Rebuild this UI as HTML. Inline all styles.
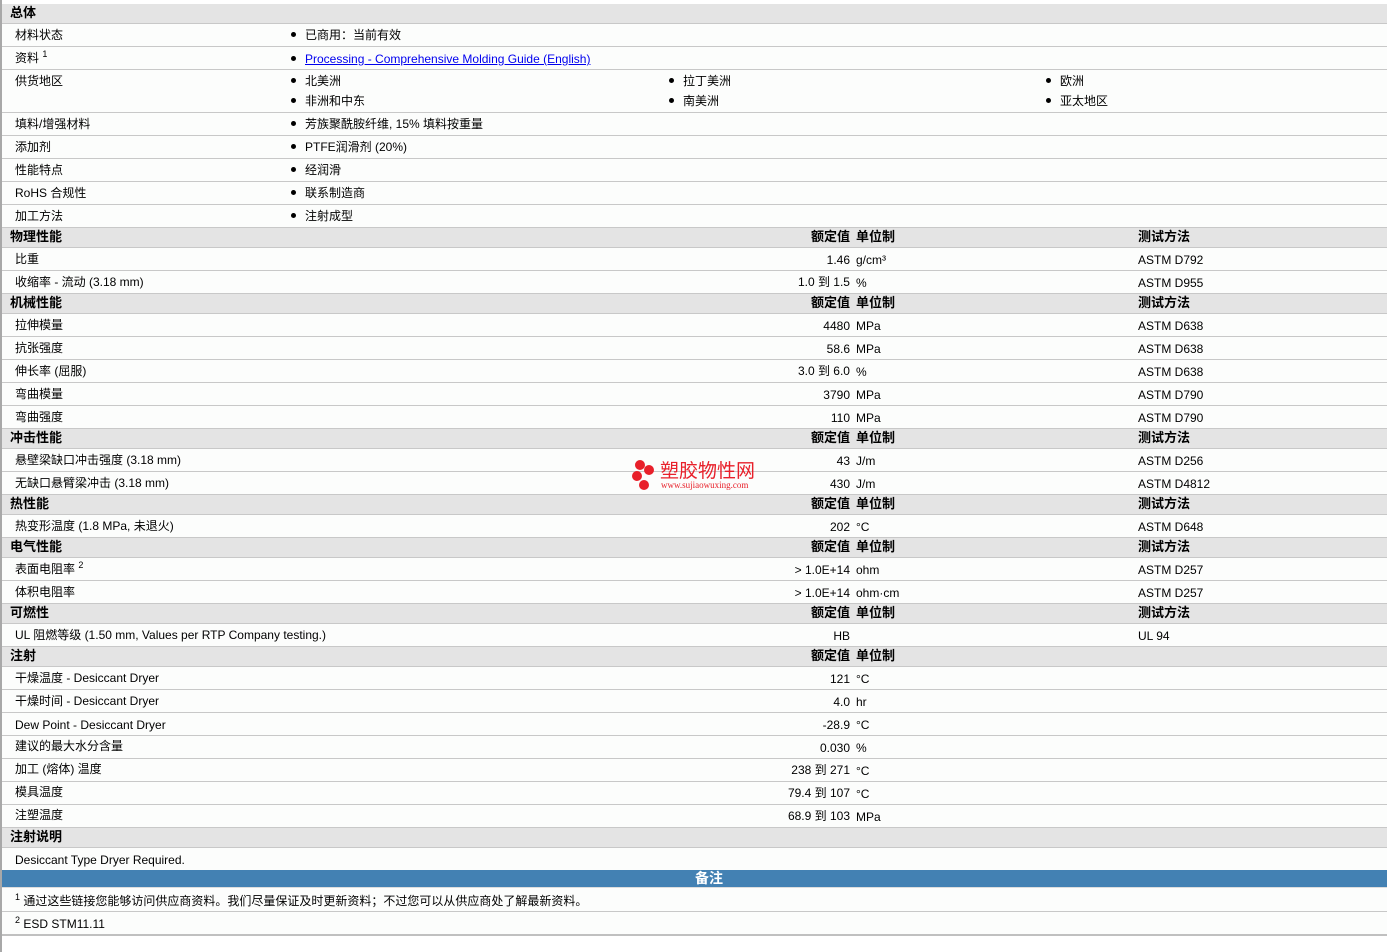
<!DOCTYPE html>
<html><head><meta charset="utf-8"><style>
html,body{margin:0;padding:0;background:#fff;}
body{width:1387px;height:952px;position:relative;overflow:hidden;font-family:"Liberation Sans","Noto Sans CJK SC","WenQuanYi Zen Hei",sans-serif;font-size:12px;color:#000;}
.lb{position:absolute;left:0;top:0;width:2px;height:952px;background:#a8a8a8;}
.r{position:absolute;left:2px;width:1385px;border-bottom:1px solid #c8c8c8;background:#fcfdfc;}
.h{background:#e4e4e4;font-weight:bold;font-size:13px;}
.r span{position:absolute;white-space:nowrap;line-height:14px;}
.l{left:13px;}
.hl{left:8px;}
.v{right:537px;text-align:right;}
.u{left:854px;}
.t{left:1136px;}
.b{left:289px;}
.b:before{content:"";display:inline-block;width:5px;height:5px;border-radius:50%;background:#000;margin-right:9px;vertical-align:2px;}
.b2{left:667px;}.b3{left:1044px;}
.b2:before,.b3:before{content:"";display:inline-block;width:5px;height:5px;border-radius:50%;background:#000;margin-right:9px;vertical-align:2px;}
sup{font-size:9px;vertical-align:5px;line-height:0;}
a{color:#0000ee;text-decoration:underline;}
.blue{background:#4381b3;color:#fff;font-weight:bold;font-size:14px;border-bottom:1px solid #ddd;}
</style></head><body>
<div class="lb"></div>

<div class="r h" style="top:4px;height:19px"><span class="hl" style="top:2px">总体</span></div>
<div class="r" style="top:24px;height:22px"><span class="l" style="top:4px">材料状态</span><span class="b" style="top:4px">已商用：当前有效</span></div>
<div class="r" style="top:47px;height:22px"><span class="l" style="top:4px">资料 <sup>1</sup></span><span class="b" style="top:5px"><a>Processing - Comprehensive Molding Guide (English)</a></span></div>
<div class="r" style="top:70px;height:42px"><span class="l" style="top:4px">供货地区</span>
<span class="b" style="top:4px">北美洲</span><span class="b2" style="top:4px">拉丁美洲</span><span class="b3" style="top:4px">欧洲</span>
<span class="b" style="top:24px">非洲和中东</span><span class="b2" style="top:24px">南美洲</span><span class="b3" style="top:24px">亚太地区</span></div>
<div class="r" style="top:113px;height:22px"><span class="l" style="top:4px">填料/增强材料</span><span class="b" style="top:4px">芳族聚酰胺纤维, 15% 填料按重量</span></div>
<div class="r" style="top:136px;height:22px"><span class="l" style="top:4px">添加剂</span><span class="b" style="top:4px">PTFE润滑剂 (20%)</span></div>
<div class="r" style="top:159px;height:22px"><span class="l" style="top:4px">性能特点</span><span class="b" style="top:4px">经润滑</span></div>
<div class="r" style="top:182px;height:22px"><span class="l" style="top:4px">RoHS 合规性</span><span class="b" style="top:4px">联系制造商</span></div>
<div class="r" style="top:205px;height:22px"><span class="l" style="top:4px">加工方法</span><span class="b" style="top:4px">注射成型</span></div>

<div class="r h" style="top:228px;height:19px"><span class="hl" style="top:2px">物理性能</span><span class="v" style="top:2px">额定值</span><span class="u" style="top:2px">单位制</span><span class="t" style="top:2px">测试方法</span></div>
<div class="r" style="top:248px;height:22px"><span class="l" style="top:4px">比重</span><span class="v" style="top:5px">1.46</span><span class="u" style="top:5px">g/cm³</span><span class="t" style="top:5px">ASTM D792</span></div>
<div class="r" style="top:271px;height:22px"><span class="l" style="top:4px">收缩率 - 流动 (3.18 mm)</span><span class="v" style="top:4px">1.0 到 1.5</span><span class="u" style="top:5px">%</span><span class="t" style="top:5px">ASTM D955</span></div>

<div class="r h" style="top:294px;height:19px"><span class="hl" style="top:2px">机械性能</span><span class="v" style="top:2px">额定值</span><span class="u" style="top:2px">单位制</span><span class="t" style="top:2px">测试方法</span></div>
<div class="r" style="top:314px;height:22px"><span class="l" style="top:4px">拉伸模量</span><span class="v" style="top:5px">4480</span><span class="u" style="top:5px">MPa</span><span class="t" style="top:5px">ASTM D638</span></div>
<div class="r" style="top:337px;height:22px"><span class="l" style="top:4px">抗张强度</span><span class="v" style="top:5px">58.6</span><span class="u" style="top:5px">MPa</span><span class="t" style="top:5px">ASTM D638</span></div>
<div class="r" style="top:360px;height:22px"><span class="l" style="top:4px">伸长率 (屈服)</span><span class="v" style="top:4px">3.0 到 6.0</span><span class="u" style="top:5px">%</span><span class="t" style="top:5px">ASTM D638</span></div>
<div class="r" style="top:383px;height:22px"><span class="l" style="top:4px">弯曲模量</span><span class="v" style="top:5px">3790</span><span class="u" style="top:5px">MPa</span><span class="t" style="top:5px">ASTM D790</span></div>
<div class="r" style="top:406px;height:22px"><span class="l" style="top:4px">弯曲强度</span><span class="v" style="top:5px">110</span><span class="u" style="top:5px">MPa</span><span class="t" style="top:5px">ASTM D790</span></div>

<div class="r h" style="top:429px;height:19px"><span class="hl" style="top:2px">冲击性能</span><span class="v" style="top:2px">额定值</span><span class="u" style="top:2px">单位制</span><span class="t" style="top:2px">测试方法</span></div>
<div class="r" style="top:449px;height:22px"><span class="l" style="top:4px">悬壁梁缺口冲击强度 (3.18 mm)</span><span class="v" style="top:5px">43</span><span class="u" style="top:5px">J/m</span><span class="t" style="top:5px">ASTM D256</span></div>
<div class="r" style="top:472px;height:22px"><span class="l" style="top:4px">无缺口悬臂梁冲击 (3.18 mm)</span><span class="v" style="top:5px">430</span><span class="u" style="top:5px">J/m</span><span class="t" style="top:5px">ASTM D4812</span></div>

<div class="r h" style="top:495px;height:19px"><span class="hl" style="top:2px">热性能</span><span class="v" style="top:2px">额定值</span><span class="u" style="top:2px">单位制</span><span class="t" style="top:2px">测试方法</span></div>
<div class="r" style="top:515px;height:22px"><span class="l" style="top:4px">热变形温度 (1.8 MPa, 未退火)</span><span class="v" style="top:5px">202</span><span class="u" style="top:5px">°C</span><span class="t" style="top:5px">ASTM D648</span></div>

<div class="r h" style="top:538px;height:19px"><span class="hl" style="top:2px">电气性能</span><span class="v" style="top:2px">额定值</span><span class="u" style="top:2px">单位制</span><span class="t" style="top:2px">测试方法</span></div>
<div class="r" style="top:558px;height:22px"><span class="l" style="top:4px">表面电阻率 <sup>2</sup></span><span class="v" style="top:5px">&gt; 1.0E+14</span><span class="u" style="top:5px">ohm</span><span class="t" style="top:5px">ASTM D257</span></div>
<div class="r" style="top:581px;height:22px"><span class="l" style="top:4px">体积电阻率</span><span class="v" style="top:5px">&gt; 1.0E+14</span><span class="u" style="top:5px">ohm·cm</span><span class="t" style="top:5px">ASTM D257</span></div>

<div class="r h" style="top:604px;height:19px"><span class="hl" style="top:2px">可燃性</span><span class="v" style="top:2px">额定值</span><span class="u" style="top:2px">单位制</span><span class="t" style="top:2px">测试方法</span></div>
<div class="r" style="top:624px;height:22px"><span class="l" style="top:4px">UL 阻燃等级 (1.50 mm, Values per RTP Company testing.)</span><span class="v" style="top:5px">HB</span><span class="t" style="top:5px">UL 94</span></div>

<div class="r h" style="top:647px;height:19px"><span class="hl" style="top:2px">注射</span><span class="v" style="top:2px">额定值</span><span class="u" style="top:2px">单位制</span></div>
<div class="r" style="top:667px;height:22px"><span class="l" style="top:4px">干燥温度 - Desiccant Dryer</span><span class="v" style="top:5px">121</span><span class="u" style="top:5px">°C</span></div>
<div class="r" style="top:690px;height:22px"><span class="l" style="top:4px">干燥时间 - Desiccant Dryer</span><span class="v" style="top:5px">4.0</span><span class="u" style="top:5px">hr</span></div>
<div class="r" style="top:713px;height:22px"><span class="l" style="top:5px">Dew Point - Desiccant Dryer</span><span class="v" style="top:5px">-28.9</span><span class="u" style="top:5px">°C</span></div>
<div class="r" style="top:736px;height:22px"><span class="l" style="top:3px">建议的最大水分含量</span><span class="v" style="top:5px">0.030</span><span class="u" style="top:5px">%</span></div>
<div class="r" style="top:759px;height:22px"><span class="l" style="top:3px">加工 (熔体) 温度</span><span class="v" style="top:4px">238 到 271</span><span class="u" style="top:5px">°C</span></div>
<div class="r" style="top:782px;height:22px"><span class="l" style="top:3px">模具温度</span><span class="v" style="top:4px">79.4 到 107</span><span class="u" style="top:5px">°C</span></div>
<div class="r" style="top:805px;height:22px"><span class="l" style="top:3px">注塑温度</span><span class="v" style="top:4px">68.9 到 103</span><span class="u" style="top:5px">MPa</span></div>

<div class="r h" style="top:828px;height:19px"><span class="hl" style="top:2px">注射说明</span></div>
<div class="r" style="top:848px;height:22px;border-bottom:none"><span class="l" style="top:5px">Desiccant Type Dryer Required.</span></div>
<div class="r blue" style="top:870px;height:17px"><span style="left:693px;top:0px;line-height:16px">备注</span></div>
<div class="r" style="top:888px;height:23px"><span class="l" style="top:6px"><sup>1</sup> 通过这些链接您能够访问供应商资料。我们尽量保证及时更新资料；不过您可以从供应商处了解最新资料。</span></div>
<div class="r" style="top:912px;height:22px;border-bottom:2px solid #c0c0c0"><span class="l" style="top:5px"><sup>2</sup> ESD STM11.11</span></div>

<div style="position:absolute;left:630px;top:458px;width:140px;height:36px;">
<svg width="28" height="36" style="position:absolute;left:0;top:0"><circle cx="10" cy="7" r="5" fill="#e8202a"/><circle cx="19" cy="12" r="5" fill="#e8202a"/><circle cx="7" cy="18" r="5" fill="#e8202a"/><circle cx="14" cy="27" r="5" fill="#e8202a"/></svg>
<span style="position:absolute;left:30px;top:2px;color:#e8202a;font-size:19px;line-height:20px;white-space:nowrap;font-family:'Noto Sans CJK SC',sans-serif">塑胶物性网</span>
<span style="position:absolute;left:31px;top:23px;color:#e8202a;font-size:9px;line-height:9px;white-space:nowrap;font-family:'Liberation Serif',serif">www.sujiaowuxing.com</span>
</div>
</body></html>
